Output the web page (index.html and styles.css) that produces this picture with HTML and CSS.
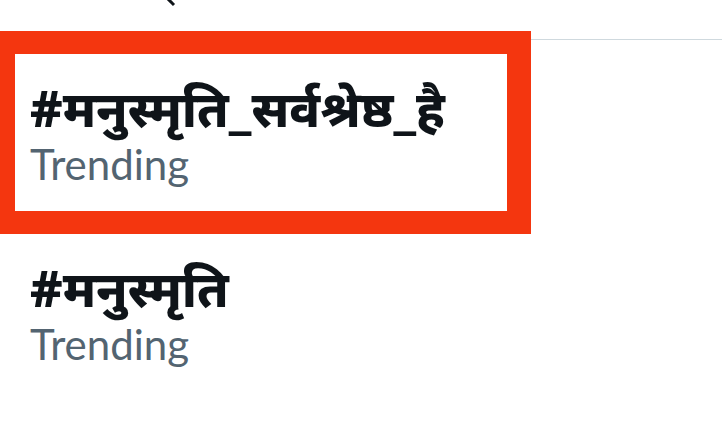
FILE: index.html
```html
<!DOCTYPE html>
<html lang="hi">
<head>
    <meta charset="UTF-8">
    <meta name="viewport" content="width=device-width, initial-scale=1.0">
    <title>Trending</title>
    <link rel="stylesheet" href="styles.css">
</head>
<body>
    <div class="cutoff">
        <svg class="cutoff-mark" width="12" height="8" viewBox="0 0 12 8">
            <path d="M1 -2 L8 5" stroke="#0f1419" stroke-width="3" fill="none"/>
        </svg>
    </div>

    <div class="section">
        <div class="highlight">
            <div class="trend">
                <div class="trend-name">#मनुस्मृति_सर्वश्रेष्ठ_है</div>
                <div class="trend-meta">Trending</div>
            </div>
        </div>
        <div class="divider"></div>
    </div>

    <div class="trend trend-plain">
        <div class="trend-name">#मनुस्मृति</div>
        <div class="trend-meta">Trending</div>
    </div>
</body>
</html>
```

FILE: styles.css
```css
body {
    margin: 0;
    background: #ffffff;
    font-family: "Noto Sans", "Noto Sans Devanagari", sans-serif;
    overflow: hidden;
}
.cutoff {
    height: 31px;
    position: relative;
}
.cutoff-mark {
    position: absolute;
    left: 166px;
    top: 0;
}
.section {
    display: flex;
    align-items: flex-start;
}
.highlight {
    width: 492px;
    height: 157px;
    border-style: solid;
    border-color: #f4360f;
    border-width: 23px 24px 23px 15px;
}
.divider {
    flex: 1;
    margin-top: 8px;
    border-top: 1px solid #cfd9de;
}
.trend {
    padding: 23px 15px 0;
}
.trend-plain {
    padding: 23px 30px 0;
}
.trend-name {
    color: #0f1419;
    font-weight: 800;
    font-size: 50px;
    line-height: 63px;
}
.trend-meta {
    color: #536471;
    font-family: Lato, sans-serif;
    font-size: 42px;
    line-height: 48px;
}
```
